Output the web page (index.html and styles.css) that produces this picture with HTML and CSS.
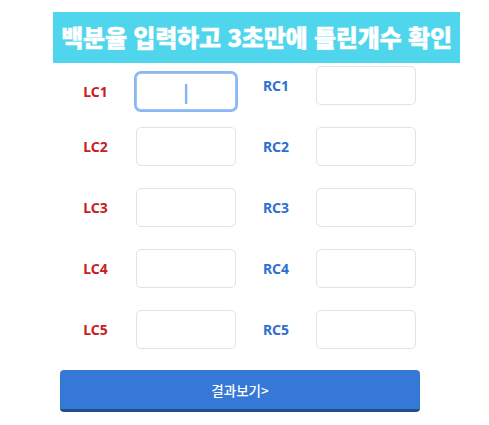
FILE: index.html
```html
<!DOCTYPE html>
<html lang="ko">
<head>
<meta charset="utf-8">
<link rel="stylesheet" href="styles.css">
</head>
<body>
<div class="page">
  <div class="banner">백분율 입력하고 3초만에 틀린개수 확인</div>
  <div class="grid">
    <div class="label lc first">LC1</div>
    <div class="box focus first"><span class="caret">|</span></div>
    <div class="label rc">RC1</div>
    <div class="box"></div>

    <div class="label lc">LC2</div>
    <div class="box"></div>
    <div class="label rc">RC2</div>
    <div class="box"></div>

    <div class="label lc">LC3</div>
    <div class="box"></div>
    <div class="label rc">RC3</div>
    <div class="box"></div>

    <div class="label lc">LC4</div>
    <div class="box"></div>
    <div class="label rc">RC4</div>
    <div class="box"></div>

    <div class="label lc">LC5</div>
    <div class="box"></div>
    <div class="label rc">RC5</div>
    <div class="box"></div>
  </div>
  <div class="button">결과보기&gt;</div>
</div>
</body>
</html>
```

FILE: styles.css
```css
html, body {
  margin: 0;
  padding: 0;
  background: #ffffff;
}
body {
  font-family: "Noto Sans CJK KR", "Noto Sans", sans-serif;
}
.page {
  width: 489px;
  padding-top: 12px;
}
.banner {
  margin-left: 53px;
  width: 407px;
  height: 51px;
  background: #4fd5ec;
  color: #ffffff;
  font-weight: 900;
  font-size: 24px;
  line-height: 50px;
  text-align: center;
  letter-spacing: -0.2px;
  white-space: nowrap;
  -webkit-text-stroke: 0.4px #ffffff;
}
.grid {
  margin-left: 55px;
  margin-top: 3px;
  display: grid;
  grid-template-columns: 81px 100px 80px 100px;
  grid-auto-rows: 39px;
  row-gap: 22px;
}
.label {
  font-family: "Noto Sans", sans-serif;
  font-weight: 700;
  font-size: 14px;
  display: flex;
  align-items: center;
  justify-content: center;
}
.label.first {
  margin-top: 6px;
  margin-bottom: -6px;
}
.lc { color: #c8201f; }
.rc { color: #2f6fcf; }
.box {
  box-sizing: border-box;
  border: 1px solid #e2e2e2;
  border-radius: 5px;
  background: #ffffff;
}
.box.focus {
  margin-top: 7px;
  margin-bottom: -5px;
  height: 37px;
  border: 1px solid #9ec3f5;
  box-shadow: 0 0 0 2px #8ab8f5;
  display: flex;
  align-items: center;
  justify-content: center;
}
.caret {
  color: #7fb0f3;
  font-family: "Noto Sans", sans-serif;
  font-size: 20px;
  font-weight: 700;
  line-height: 1;
}
.button {
  box-sizing: border-box;
  margin-left: 60px;
  margin-top: 21px;
  width: 360px;
  height: 42px;
  padding-top: 1px;
  background: #3578d5;
  border-radius: 4px;
  border-bottom: 3px solid #1f4f8f;
  color: #ffffff;
  font-size: 13.5px;
  font-weight: 500;
  display: flex;
  align-items: center;
  justify-content: center;
}
```
